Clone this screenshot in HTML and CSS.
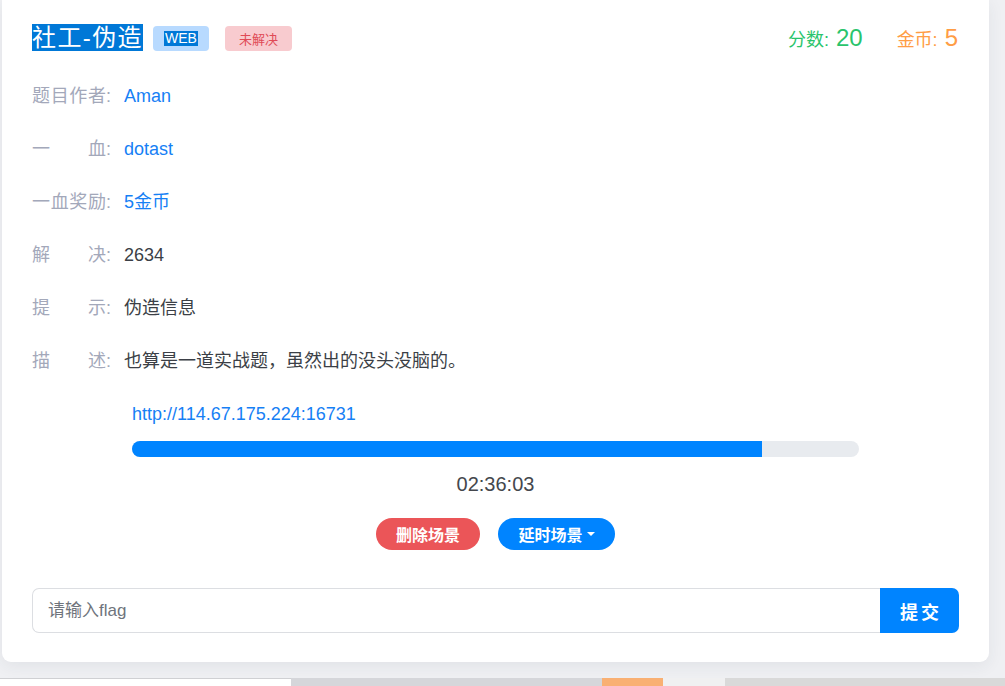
FILE: index.html
```html
<!DOCTYPE html>
<html lang="zh-CN">
<head>
<meta charset="utf-8">
<title>社工-伪造</title>
<link rel="stylesheet" href="styles.css">
</head>
<body>
<div class="card">
  <div class="header">
    <div class="title-group">
      <h1 class="title"><span class="sel">社工-伪造</span></h1>
      <span class="badge badge-web"><span class="sel">WEB</span></span>
      <span class="badge badge-unsolved">未解决</span>
    </div>
    <div class="stats">
      <span class="stat stat-score">分数: <b class="num">20</b></span>
      <span class="stat stat-coin">金币: <b class="num">5</b></span>
    </div>
  </div>

  <div class="rows">
    <div class="row"><span class="label"><span class="label-text">题目作者</span><span class="colon">:</span></span><span class="value link">Aman</span></div>
    <div class="row"><span class="label"><span class="label-text">一血</span><span class="colon">:</span></span><span class="value link">dotast</span></div>
    <div class="row"><span class="label"><span class="label-text">一血奖励</span><span class="colon">:</span></span><span class="value link">5金币</span></div>
    <div class="row"><span class="label"><span class="label-text">解决</span><span class="colon">:</span></span><span class="value">2634</span></div>
    <div class="row"><span class="label"><span class="label-text">提示</span><span class="colon">:</span></span><span class="value">伪造信息</span></div>
    <div class="row"><span class="label"><span class="label-text">描述</span><span class="colon">:</span></span><span class="value">也算是一道实战题，虽然出的没头没脑的。</span></div>
  </div>

  <div class="scene">
    <div class="url">http://114.67.175.224:16731</div>
    <div class="progress"><div class="progress-fill" style="width: 86.7%"></div></div>
    <div class="timer">02:36:03</div>
    <div class="actions">
      <button class="btn btn-danger">删除场景</button>
      <button class="btn btn-primary">延时场景<span class="caret"></span></button>
    </div>
  </div>

  <div class="flag-form">
    <input class="flag-input" type="text" placeholder="请输入flag">
    <button class="flag-submit">提交</button>
  </div>
</div>

<div class="strip">
  <div class="seg seg-white"></div>
  <div class="seg seg-gray"></div>
  <div class="seg seg-orange"></div>
  <div class="seg seg-light"></div>
  <div class="seg seg-gray2"></div>
</div>
</body>
</html>
```

FILE: styles.css
```css
* { box-sizing: border-box; }

html, body {
  margin: 0;
  padding: 0;
}

body {
  background: #eff0f3;
  font-family: "Liberation Sans", "Noto Sans CJK SC", sans-serif;
  color: #3b3f46;
  width: 1005px;
  height: 686px;
  overflow: hidden;
}

.card {
  margin-left: 2px;
  width: 987px;
  background: #ffffff;
  border-radius: 0 0 9px 9px;
  box-shadow: 0 4px 16px rgba(40, 50, 70, 0.07);
  padding: 17px 30px 29px 30px;
}

.header {
  display: flex;
  align-items: center;
  justify-content: space-between;
  height: 42px;
}

.title-group {
  display: flex;
  align-items: center;
}

.title {
  margin: 0;
  font-size: 24px;
  line-height: 32px;
  font-weight: normal;
  letter-spacing: 1.4px;
  color: #ffffff;
}

.sel {
  background: #0078d7;
  color: #ffffff;
}

.badge {
  display: inline-flex;
  align-items: center;
  justify-content: center;
  height: 25px;
  border-radius: 4px;
  font-size: 13px;
}

.badge-web {
  margin-left: 10px;
  width: 56px;
  background: #b8daff;
  font-size: 14px;
}

.badge-web .sel {
  padding: 0 1px;
  line-height: 15px;
}

.badge-unsolved {
  margin-left: 16px;
  width: 67px;
  background: #f8cbcf;
  color: #e04a56;
}

.stats {
  display: flex;
  align-items: baseline;
  gap: 34px;
  padding-right: 1px;
}

.stat {
  font-size: 18px;
}

.num {
  font-weight: normal;
  font-size: 24px;
  margin-left: 2px;
}

.stat-score { color: #2ac46c; }
.stat-coin { color: #ff9d45; }

.rows {
  margin-top: 10px;
}

.row {
  display: flex;
  align-items: baseline;
  height: 53px;
  padding-top: 14px;
  font-size: 18px;
  line-height: 27px;
}

.label {
  display: inline-flex;
  align-items: baseline;
  color: #a3a8ba;
  margin-right: 12px;
}

.label-text {
  display: inline-block;
  width: 74px;
  text-align: justify;
  text-align-last: justify;
}

.colon {
  display: inline-block;
  width: 6px;
}

.value { color: #3b3f46; }
.value.link { color: #1680f5; }

.scene {
  margin: 14px auto 0;
  width: 727px;
}

.url {
  font-size: 18px;
  line-height: 27px;
  color: #1680f5;
}

.progress {
  margin-top: 13px;
  height: 16px;
  border-radius: 8px;
  background: #e8ebef;
  overflow: hidden;
}

.progress-fill {
  height: 100%;
  background: #0084ff;
}

.timer {
  margin-top: 13px;
  text-align: center;
  font-size: 20px;
  line-height: 28px;
  color: #44474d;
}

.actions {
  margin-top: 20px;
  display: flex;
  justify-content: center;
  gap: 18px;
}

.btn {
  border: none;
  height: 32px;
  border-radius: 16px;
  color: #ffffff;
  font-family: "Noto Sans CJK SC", sans-serif;
  font-size: 16px;
  font-weight: bold;
  display: inline-flex;
  align-items: center;
  justify-content: center;
  padding: 0;
}

.btn-danger {
  width: 104px;
  background: #eb5558;
}

.btn-primary {
  width: 117px;
  background: #0084ff;
}

.caret {
  display: inline-block;
  margin-left: 4px;
  width: 0;
  height: 0;
  border-left: 4px solid transparent;
  border-right: 4px solid transparent;
  border-top: 4px solid #ffffff;
}

.flag-form {
  margin-top: 38px;
  display: flex;
  height: 45px;
}

.flag-input {
  flex: 1;
  height: 45px;
  border: 1px solid #dcdee2;
  border-right: none;
  border-radius: 7px 0 0 7px;
  padding: 0 15px;
  font-family: "Liberation Sans", "Noto Sans CJK SC", sans-serif;
  font-size: 17px;
  color: #3b3f46;
  outline: none;
}

.flag-input::placeholder {
  color: #6f747c;
}

.flag-submit {
  width: 79px;
  height: 45px;
  border: none;
  border-radius: 0 7px 7px 0;
  background: #0084ff;
  color: #ffffff;
  font-family: "Noto Sans CJK SC", sans-serif;
  font-size: 18px;
  font-weight: bold;
  letter-spacing: 3px;
  padding: 0 0 0 3px;
}

.strip {
  margin-top: 16px;
  display: flex;
  height: 8px;
}

.seg { height: 8px; }
.seg-white { width: 291px; background: #ffffff; border-top: 1px solid #cfd0d3; }
.seg-gray { width: 311px; background: #d5d6da; }
.seg-orange { width: 61px; background: #f9b073; }
.seg-light { width: 62px; background: #f0f0f1; }
.seg-gray2 { flex: 1; background: #d9d9d9; }
```
